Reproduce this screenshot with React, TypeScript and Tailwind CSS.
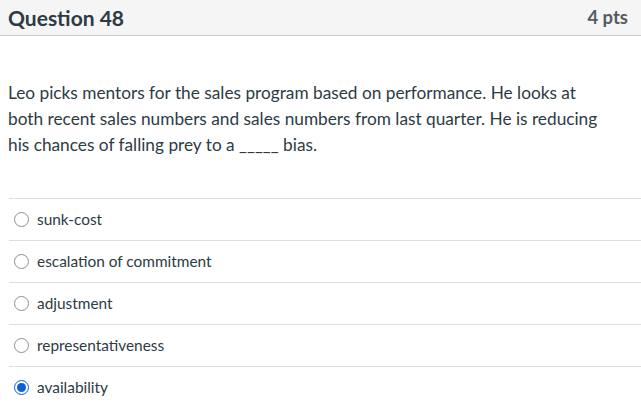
const answers = [
  { label: 'sunk-cost', checked: false },
  { label: 'escalation of commitment', checked: false },
  { label: 'adjustment', checked: false },
  { label: 'representativeness', checked: false },
  { label: 'availability', checked: true },
]

function Radio({ checked }: { checked: boolean }) {
  if (checked) {
    return (
      <span className="flex h-[15px] w-[15px] items-center justify-center rounded-full border-[1.5px] border-[#0b5ed7] bg-white">
        <span className="h-[9px] w-[9px] rounded-full bg-[#0b5ed7]" />
      </span>
    )
  }
  return <span className="h-[15px] w-[15px] rounded-full border border-[#8a8f94] bg-white" />
}

export default function App() {
  return (
    <div className="min-h-screen bg-white text-[#2d3b45]" style={{ fontFamily: 'Lato, "Noto Sans", sans-serif' }}>
      <div className="flex h-[36px] items-center justify-between border-b border-[#c7cdd1] bg-[#f5f5f5] pl-2 pr-[13px]">
        <span className="text-[21px] font-bold">Question 48</span>
        <span className="text-[18.5px] font-bold text-[#545b61]">4 pts</span>
      </div>

      <div className="pl-2 pr-[27px] pt-[44px]">
        <p className="text-[17.25px] leading-[26px]">
          Leo picks mentors for the sales program based on performance. He looks at both recent sales numbers and
          sales numbers from last quarter. He is reducing his chances of falling prey to a _____ bias.
        </p>
      </div>

      <div className="ml-[9px] mt-[40px]">
        {answers.map((a) => (
          <div key={a.label} className="flex h-[42px] items-center gap-2 border-t border-[#dcdfe2] pl-[5px]">
            <Radio checked={a.checked} />
            <span className="text-[15.4px]">{a.label}</span>
          </div>
        ))}
      </div>
    </div>
  )
}
